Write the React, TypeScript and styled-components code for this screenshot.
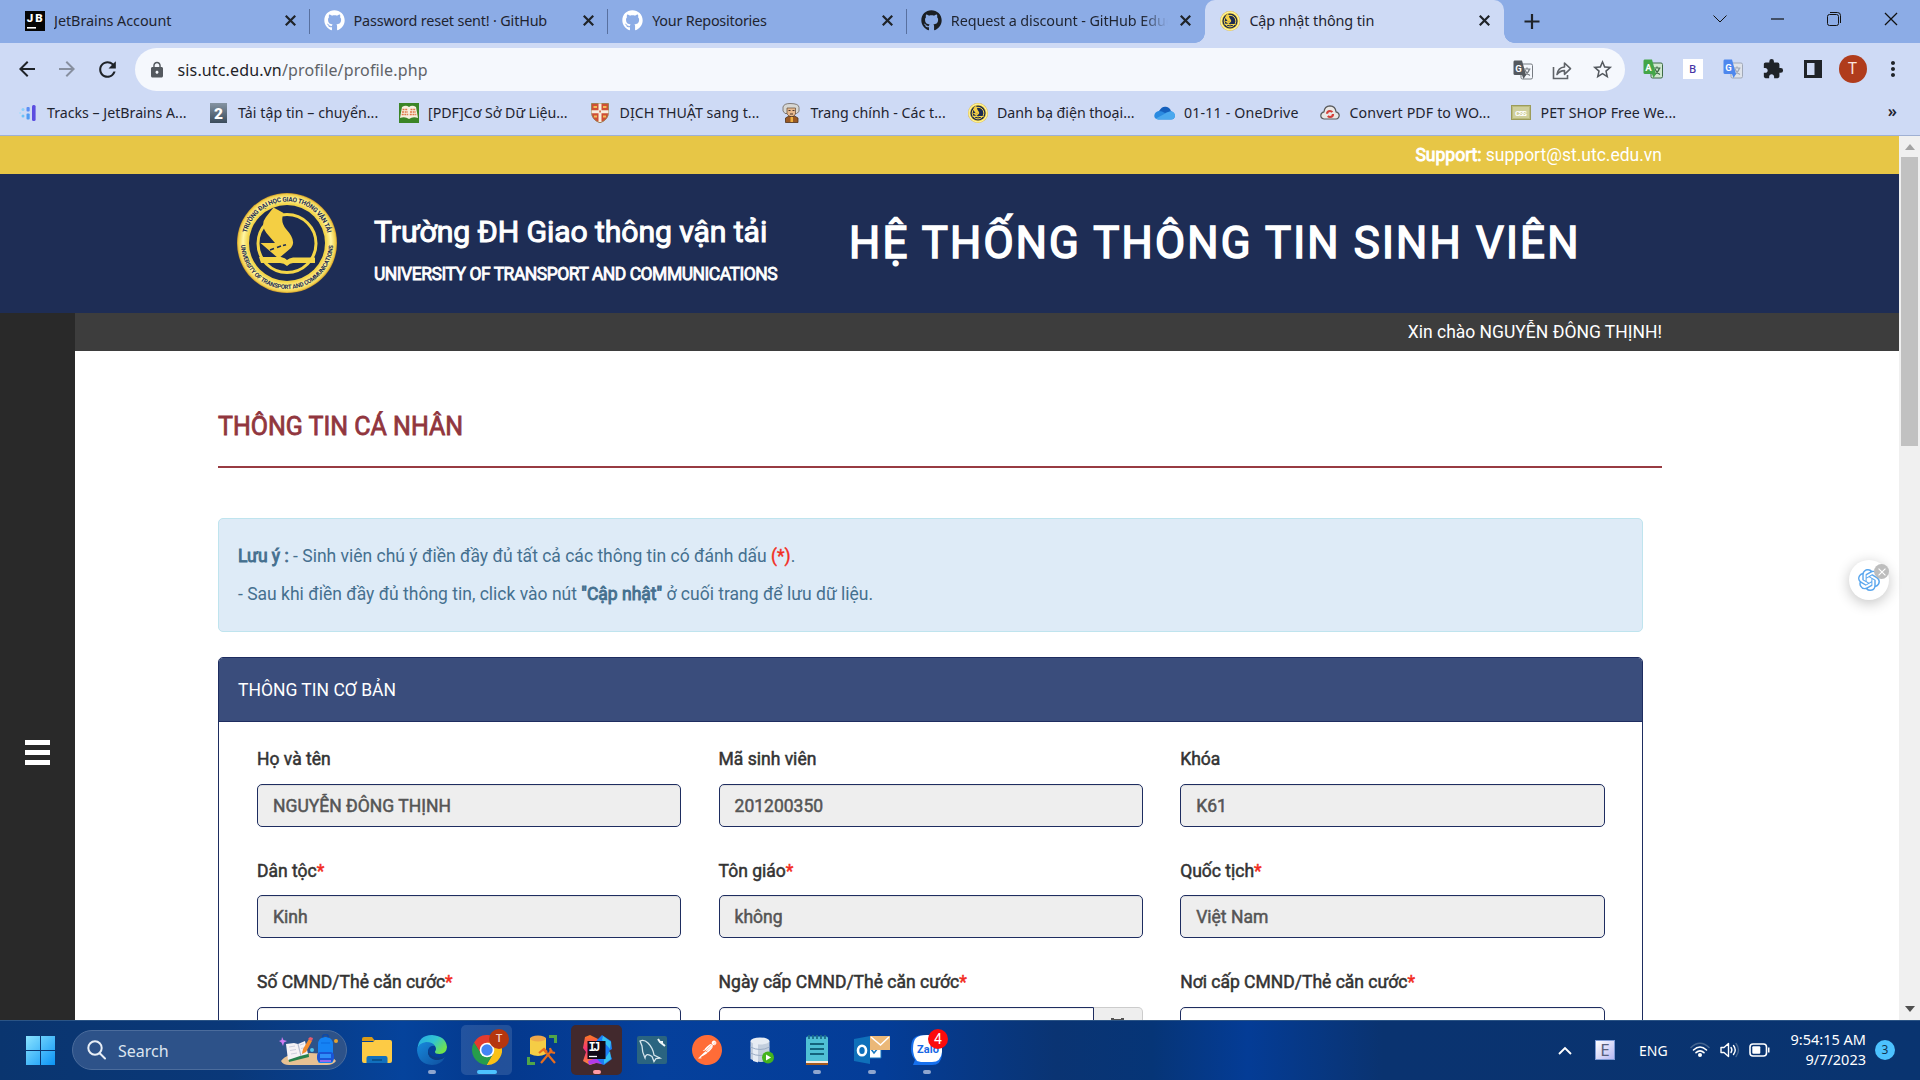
import React from 'react';
import styled, { createGlobalStyle, css } from 'styled-components';
import { FaGithub } from 'react-icons/fa';
import { MdExtension, MdLock, MdStarBorder, MdRefresh, MdArrowBack, MdArrowForward, MdMoreVert } from 'react-icons/md';
import { SiOpenai, SiPostman } from 'react-icons/si';

const GlobalStyle = createGlobalStyle`
  * { box-sizing: border-box; }
  html, body { margin: 0; padding: 0; overflow: hidden; }
  svg { display: block; flex: none; }
`;

const uiFont = `"Noto Sans", "Open Sans", sans-serif`;

const Screen = styled.div`
  width: 1920px;
  height: 1080px;
  display: flex;
  flex-direction: column;
  overflow: hidden;
  background: #fff;
  font-family: Roboto, sans-serif;
`;

/* ---------- browser chrome ---------- */

const TabStrip = styled.div`
  height: 43px;
  flex: none;
  display: flex;
  align-items: stretch;
  padding-left: 11px;
  background: #8cace6;
  font-family: ${uiFont};
`;

const Tab = styled.div<{ $active?: boolean; $divider?: boolean }>`
  position: relative;
  width: 298.6px;
  flex: none;
  display: flex;
  align-items: center;
  padding: 0 14px 2px 14px;
  font-size: 14.4px;
  color: #1f2430;
  ${(p) =>
    p.$divider &&
    css`
      &::after {
        content: '';
        position: absolute;
        right: 0;
        top: 9px;
        width: 1px;
        height: 25px;
        background: #58709f;
      }
    `}
  ${(p) =>
    p.$active &&
    css`
      background: #cedaf5;
      border-radius: 10px 10px 0 0;
      padding-left: 15px;
      &::before,
      &::after {
        content: '';
        position: absolute;
        bottom: 0;
        width: 10px;
        height: 10px;
      }
      &::before {
        left: -10px;
        background: radial-gradient(circle at 0 0, transparent 9.5px, #cedaf5 10px);
      }
      &::after {
        right: -10px;
        background: radial-gradient(circle at 100% 0, transparent 9.5px, #cedaf5 10px);
      }
    `}
`;

const TabTitle = styled.span<{ $ls?: number; $fade?: boolean }>`
  flex: 1;
  margin-left: 9px;
  overflow: hidden;
  white-space: nowrap;
  letter-spacing: ${(p) => p.$ls ?? 0}px;
  ${(p) => p.$fade && 'margin-right: 10px; mask-image: linear-gradient(90deg, #000 87%, transparent 99%);'}
`;

const WindowButtons = styled.div`
  margin-left: auto;
  display: flex;
  align-items: flex-start;
  padding-top: 9px;
`;

const WindowButton = styled.div`
  width: 57.2px;
  height: 20px;
  display: flex;
  align-items: center;
  justify-content: center;
`;

const Toolbar = styled.div`
  height: 53px;
  flex: none;
  display: flex;
  align-items: center;
  padding: 0 0 1px 15px;
  background: #cedaf5;
  color: #1f2328;
`;

const NavButton = styled.div<{ $dim?: boolean }>`
  width: 40px;
  display: flex;
  justify-content: flex-start;
  color: ${(p) => (p.$dim ? '#878f9f' : '#1f2328')};
`;

const AddressBar = styled.div`
  width: 1490px;
  flex: none;
  height: 43px;
  margin-top: 1px;
  display: flex;
  align-items: center;
  border-radius: 22px;
  background: #f5f8fd;
  padding: 0 11px 0 13px;
  font-family: ${uiFont};
  font-size: 16px;
  color: #1f2328;
`;

const Url = styled.span`
  margin-left: 11.5px;
  letter-spacing: 0.14px;
  flex: 1;
  span { color: #5f6368; }
`;

const AddressActions = styled.div`
  display: flex;
  align-items: center;
  gap: 19px;
  color: #54595f;
`;

const Extensions = styled.div`
  flex: 1;
  display: flex;
  align-items: center;
  padding-left: 7.5px;
`;

const ExtSlot = styled.div`
  width: 40px;
  flex: none;
  display: flex;
  justify-content: center;
`;

const LetterTile = styled.div`
  width: 20px;
  height: 20px;
  background: #fff;
  color: #4633a5;
  font: 500 11px/20px ${uiFont};
  text-align: center;
`;

const Avatar = styled.div<{ $size: number }>`
  width: ${(p) => p.$size}px;
  height: ${(p) => p.$size}px;
  border-radius: 50%;
  background: #b03c1c;
  color: #fbe6df;
  font: 400 ${(p) => p.$size * 0.56}px/${(p) => p.$size}px Roboto, sans-serif;
  text-align: center;
`;

const Bookmarks = styled.div`
  height: 40px;
  flex: none;
  display: flex;
  align-items: center;
  padding: 0 23px 6px 17px;
  background: #cedaf5;
  border-bottom: 1px solid #9fb0d3;
  font-family: ${uiFont};
  font-size: 14.2px;
  color: #1f2430;
`;

const Bookmark = styled.div<{ $w: number; $ls: number }>`
  width: ${(p) => p.$w}px;
  flex: none;
  display: flex;
  align-items: center;
  gap: 9px;
  white-space: nowrap;
  letter-spacing: ${(p) => p.$ls}px;
`;

const BookmarkIcon = styled.div`
  width: 21px;
  flex: none;
  display: flex;
  justify-content: center;
`;

const More = styled.span`
  margin-left: auto;
  font-weight: 600;
  font-size: 16px;
  line-height: 18px;
  padding-bottom: 3px;
`;

/* ---------- web page ---------- */

const Viewport = styled.div`
  height: 884px;
  flex: none;
  display: flex;
  overflow: hidden;
  position: relative;
`;

const Page = styled.div`
  width: 1899px;
  flex: none;
  display: flex;
  flex-direction: column;
  overflow: hidden;
`;

const SupportBar = styled.div`
  height: 38px;
  flex: none;
  background: #e7c646;
  color: #fff;
  padding-right: 237px;
  font-size: 17.5px;
  line-height: 38px;
  text-align: right;
  b { font-weight: 400; -webkit-text-stroke: 0.9px; }
`;

const Header = styled.div`
  height: 139px;
  flex: none;
  display: flex;
  align-items: center;
  padding: 0 0 1px 237px;
  background: #1e2d55;
  color: #fff;
`;

const School = styled.div`
  width: 475px;
  margin-left: 37px;
  padding-top: 12px;
  white-space: nowrap;
`;

const SchoolName = styled.div`
  font-size: 30.2px;
  line-height: 40px;
  letter-spacing: -0.1px;
  -webkit-text-stroke: 1px;
`;

const SchoolEnglish = styled.div`
  margin-top: 9px;
  font-size: 17.5px;
  line-height: 26px;
  letter-spacing: -0.49px;
  -webkit-text-stroke: 0.8px;
`;

const SystemName = styled.div`
  font-size: 43.75px;
  line-height: 60px;
  letter-spacing: 2.2px;
  -webkit-text-stroke: 1.6px;
  white-space: nowrap;
`;

const Body = styled.div`
  flex: 1;
  display: flex;
  min-height: 0;
`;

const Sidebar = styled.div`
  width: 75px;
  flex: none;
  background: #292929;
  display: flex;
  flex-direction: column;
  align-items: center;
  gap: 4.4px;
  padding-top: 426.7px;
`;

const MenuLine = styled.div`
  width: 25px;
  height: 5.6px;
  background: #fff;
`;

const Main = styled.div`
  flex: 1;
  min-width: 0;
`;

const Greeting = styled.div`
  height: 38px;
  padding-right: 237px;
  background: #3d3d3d;
  color: #fff;
  font-size: 17.5px;
  line-height: 38px;
  text-align: right;
`;

const Content = styled.div`
  padding: 0 237px 0 143px;
`;

const SectionTitle = styled.div`
  height: 117px;
  padding-top: 58px;
  border-bottom: 2px solid #983b42;
  color: #91363e;
  font-size: 25px;
  line-height: 36px;
  -webkit-text-stroke: 0.8px;
`;

const Notice = styled.div`
  width: 1425px;
  height: 114px;
  margin-top: 50px;
  padding: 18px 19px;
  border: 1px solid #bfe4ee;
  border-radius: 5px;
  background: #deebf7;
  color: #45708f;
  font-size: 17.5px;
  line-height: 38px;
  b { font-weight: 400; -webkit-text-stroke: 0.9px; }
  i { font-style: normal; color: #f22c22; -webkit-text-stroke: 0.4px; }
`;

const Panel = styled.div`
  width: 1425px;
  height: 600px;
  margin-top: 25px;
  border: 1px solid #1e2d60;
  border-radius: 5px;
  overflow: hidden;
`;

const PanelHead = styled.div`
  height: 64px;
  padding: 0 19px;
  background: #3a4d7c;
  border-bottom: 1px solid #1e2d60;
  color: #fff;
  font-size: 17.5px;
  line-height: 65px;
`;

const Fields = styled.div`
  display: grid;
  grid-template-columns: repeat(3, 424.4px);
  column-gap: 37.2px;
  row-gap: 31.95px;
  padding: 25px 38px;
`;

const Label = styled.div`
  height: 25px;
  margin-bottom: 11.6px;
  color: #333;
  font-size: 17.5px;
  line-height: 25px;
  -webkit-text-stroke: 0.5px;
  span { color: #f22c22; }
`;

const InputGroup = styled.div`
  display: flex;
`;

const Input = styled.div<{ $disabled?: boolean; $addon?: boolean }>`
  flex: 1;
  height: 43px;
  padding: 0 15px;
  border: 1px solid #1e2d60;
  border-radius: ${(p) => (p.$addon ? '5px 0 0 5px' : '5px')};
  background: ${(p) => (p.$disabled ? '#eee' : '#fff')};
  box-shadow: inset 0 1px 1px rgba(0, 0, 0, 0.075);
  color: #555;
  font-size: 17.5px;
  line-height: 42px;
  -webkit-text-stroke: 0.5px;
`;

const Addon = styled.div`
  width: 49px;
  height: 43px;
  display: flex;
  justify-content: center;
  padding-top: 10px;
  border: 1px solid #ccc;
  border-left: 0;
  border-radius: 0 5px 5px 0;
  background: #eee;
`;

const Scrollbar = styled.div`
  width: 21px;
  flex: none;
  background: #f0f0f0;
  display: flex;
  flex-direction: column;
  align-items: center;
  padding: 8px 0 8px;
`;

const Thumb = styled.div`
  width: 17px;
  height: 289px;
  margin: 7px 0 auto;
  background: #c1c1c1;
`;

const ChatBubble = styled.div`
  position: absolute;
  left: 1849px;
  top: 424px;
  width: 40px;
  height: 40px;
  border-radius: 50%;
  background: #fff;
  box-shadow: 0 3px 14px rgba(0, 0, 0, 0.24);
  display: flex;
  align-items: center;
  justify-content: center;
  color: #5aa7ee;
`;

const ChatClose = styled.div`
  position: absolute;
  right: 0;
  top: 4px;
  width: 15px;
  height: 15px;
  border-radius: 50%;
  background: #bdbdbd;
  display: flex;
  align-items: center;
  justify-content: center;
`;

/* ---------- task bar ---------- */

const Taskbar = styled.div`
  height: 60px;
  flex: none;
  display: flex;
  align-items: center;
  padding-left: 26px;
  border-top: 1px solid #2b5485;
  background: linear-gradient(90deg, #0a356f 0%, #0a3879 12%, #05439c 21%, #04388c 26%, #05409c 34%, #043d98 46%, #0a3473 55%, #063577 60%, #043c96 65%, #0a3370 72%, #093470 100%);
  color: #fff;
  font-family: ${uiFont};
`;

const SearchBox = styled.div`
  width: 275px;
  height: 40px;
  margin: 0 2px 1px 17px;
  display: flex;
  align-items: center;
  padding: 0 7px 0 14px;
  border: 1px solid #4b6c9c;
  border-radius: 20px;
  background: #2d5289;
  color: #dce5f0;
  font-size: 16px;
  span { margin: 1px 0 0 12px; flex: 1; letter-spacing: 0; }
`;

const TaskItem = styled.div<{ $tile?: string }>`
  position: relative;
  width: 51px;
  height: 50px;
  margin: 0 2px 1px;
  display: flex;
  align-items: center;
  justify-content: center;
  border-radius: 5px;
  background: ${(p) => p.$tile ?? 'transparent'};
`;

const Running = styled.div<{ $w: number; $c: string }>`
  position: absolute;
  bottom: 1px;
  left: calc(50% - ${(p) => p.$w / 2}px);
  width: ${(p) => p.$w}px;
  height: 4px;
  border-radius: 2px;
  background: ${(p) => p.$c};
`;

const CornerBadge = styled.div<{ $red?: boolean }>`
  position: absolute;
  right: ${(p) => (p.$red ? 4 : 3)}px;
  top: 4px;
  width: 20px;
  height: 20px;
  border-radius: 50%;
  background: ${(p) => (p.$red ? '#fb0b0b' : '#b5360f')};
  color: ${(p) => (p.$red ? '#fff' : '#f3cfc2')};
  font: ${(p) => (p.$red ? '400 14px' : '500 11px')}/20px Roboto, sans-serif;
  text-align: center;
`;

const Tray = styled.div`
  margin-left: auto;
  display: flex;
  align-items: center;
  padding: 0 25px 1px 0;
  font-size: 14.5px;
`;

const InputTile = styled.div`
  width: 20px;
  height: 20px;
  margin: 0 24px 0 23px;
  background: linear-gradient(135deg, #fff, #b6b8f3);
  border: 1px solid #7d9ad5;
  color: #56607c;
  font: 400 17px/18px ${uiFont};
  text-align: center;
`;

const Language = styled.span`
  width: 51px;
  font-size: 14px;
`;

const TrayIcons = styled.div`
  display: flex;
  align-items: center;
  gap: 9.5px;
`;

const Clock = styled.div`
  width: 85px;
  margin: 0 0 2px 11px;
  text-align: right;
  line-height: 20px;
  white-space: nowrap;
`;

const CountBadge = styled.div`
  width: 20px;
  height: 20px;
  margin-left: 9px;
  border-radius: 50%;
  background: #4cc2ff;
  color: #12344f;
  font-size: 12px;
  line-height: 20px;
  text-align: center;
`;

/* ---------- drawings ---------- */

const Cross = ({ size = 10, color = '#1f2328', w = 2 }: { size?: number; color?: string; w?: number }) => (
  <svg width={size} height={size} viewBox="0 0 10 10">
    <path d="M.7.7l8.6 8.6M9.3.7L.7 9.3" stroke={color} strokeWidth={w} fill="none" />
  </svg>
);

const Seal = ({ size, detailed }: { size: number; detailed?: boolean }) => (
  <svg width={size} height={size} viewBox="0 0 100 100">
    <defs>
      <radialGradient id="ring" cx="50%" cy="50%" r="50%">
        <stop offset="78%" stopColor="#f3d54a" />
        <stop offset="88%" stopColor="#fff6a4" />
        <stop offset="97%" stopColor="#f1cf4b" />
        <stop offset="100%" stopColor="#c9962c" />
      </radialGradient>
      <path id="arcTop" d="M8.500 50a41.500 41.500 0 0 1 83 0" />
      <path id="arcBottom" d="M4 50a46 46 0 0 0 92 0" />
    </defs>
    <circle cx="50" cy="50" r="50" fill="url(#ring)" />
    <circle cx="50" cy="50" r="38" fill="#1c2b52" />
    <circle cx="50" cy="50.500" r="29" fill="none" stroke="#f4d548" strokeWidth={detailed ? 3 : 5} />
    <path d="M29 24Q22 33 32 43L38 50H23.500L41.500 65.500 54 55Q60 48 49 36 43 29 46.500 20L36.500 14.500Z" fill="#f4cf43" />
    <path d="M22 64H44Q48.500 65 50 67Q52 65 56 64.500H78V70H56Q53 70 50 73Q47 70 43 70H24Z" fill="#f4d548" />
    <path d="M33 57l4-1.500M40 54.500l4-1.500M46 52.500l3-.8" stroke="#1c2b52" strokeWidth="1.600" />
    {detailed && (
      <g fill="#1c2b52" fontFamily="Roboto, sans-serif" fontWeight="700" fontSize="6.4">
        <text><textPath href="#arcTop" startOffset="10" textLength="110">TRƯỜNG ĐẠI HỌC GIAO THÔNG VẬN TẢI</textPath></text>
        <text fontSize="6"><textPath href="#arcBottom" startOffset="2" textLength="140">UNIVERSITY OF TRANSPORT AND COMMUNICATIONS</textPath></text>
      </g>
    )}
  </svg>
);

const JetBrainsIcon = () => (
  <svg width="20" height="20" viewBox="0 0 20 20">
    <rect width="20" height="20" fill="#050505" />
    <text x="1.800" y="11" fontFamily="Roboto, sans-serif" fontWeight="900" fontSize="11.500" fill="#fff" textLength="16">JB</text>
    <rect x="2" y="16" width="9" height="1.600" fill="#fff" />
  </svg>
);

const TranslateIcon = ({ front, back, line, letter = 'G' }: { front: string; back: string; line: string; letter?: string }) => (
  <svg width="20" height="20" viewBox="0 0 20 20">
    <rect x="8" y="4" width="11.500" height="15" rx="1.500" fill={back} stroke={line} strokeWidth="1" />
    <path d="M10.500 9h7M14 7.500V9M16.500 9q-1 4-5 6.500M12 10q1.500 4 5 5.500" stroke={line} strokeWidth="1.200" fill="none" />
    <path d="M1.500 0.500H9L13 15H2Q.5 15 .5 13.500V2Q.5.500 1.500.5Z" fill={front} />
    <path d="M9 15h4l-2.500 4z" fill={front} />
    <text x="2.300" y="11.500" fontFamily="Roboto, sans-serif" fontWeight="700" fontSize="9.500" fill="#fff">{letter}</text>
  </svg>
);

const ShareIcon = () => (
  <svg width="20" height="20" viewBox="0 0 20 20" fill="none" stroke="#5f6368" strokeWidth="1.600">
    <path d="M1.500 7v11.500h14V15" />
    <path d="M5 14.500Q6 7.500 12.500 7V3L18.500 8.700 12.500 14.300V10.600Q8 10.500 5 14.500Z" strokeLinejoin="round" />
  </svg>
);

const TracksIcon = () => (
  <svg width="18" height="18" viewBox="0 0 18 18">
    <rect x="13" y="1" width="3.600" height="16" rx="1.500" fill="#5b4de0" />
    <rect x="7.500" y="3" width="3.200" height="4.500" rx="1" fill="#5a8df5" />
    <rect x="7.500" y="9.500" width="3.200" height="6" rx="1" fill="#4e9cf5" />
    <circle cx="4" cy="5.500" r="1.500" fill="#8cd0fa" />
    <circle cx="4" cy="12" r="1.500" fill="#6bc1f8" />
    <circle cx="1.200" cy="9" r="1" fill="#a8dcfb" />
  </svg>
);

const TwoIcon = () => (
  <svg width="17" height="20" viewBox="0 0 17 20">
    <defs><linearGradient id="two" x2="0" y2="1"><stop stopColor="#8594a3" /><stop offset="1" stopColor="#3b4c5c" /></linearGradient></defs>
    <rect width="17" height="20" fill="url(#two)" />
    <text x="4" y="15.500" fontFamily="Roboto, sans-serif" fontWeight="900" fontSize="15.500" fill="#fff">2</text>
  </svg>
);

const BookIcon = () => (
  <svg width="20" height="20" viewBox="0 0 20 20">
    <rect width="20" height="20" fill="#3b8527" />
    <path d="M3 4q4-2.500 7 0 3-2.500 7 0l2 11q-5-2-9 1-4-3-9-1z" fill="#f8efdf" />
    <path d="M3.500 6.500h5M11.500 6.500h5M3 9h6M11 9h6M2.700 11.500h6.500M10.800 11.500h6.500" stroke="#e0774a" strokeWidth="1.300" strokeDasharray="2 .7" />
  </svg>
);

const ShieldIcon = () => (
  <svg width="18" height="20" viewBox="0 0 18 20">
    <path d="M.5.500h17V9q0 8-8.500 10.800Q.5 17 .5 9Z" fill="#cf4f35" stroke="#9f8055" />
    <path d="M7.500.500h3v6.700H17.500v3H10.500v8.700H7.500v-8.700H.5V7.200H7.500Z" fill="#f6eee0" />
    <path d="M2.500 3h3.500v2H2.500zM12 3h3.500v2H12zM3 12.500h3v2H3zM12 12.500h3v2h-3z" fill="#f1bd57" />
    <path d="M8.300 7.500h1.500v2H8.300z" fill="#cf4f35" />
  </svg>
);

const PortraitIcon = () => (
  <svg width="18" height="20" viewBox="0 0 18 20">
    <path d="M1 4Q2 .5 8 .5q9 0 9 4v4l-2.500 2H3L1 8Z" fill="#d7d7d4" stroke="#6d655d" strokeWidth=".8" />
    <path d="M5 5h8.500V11l-2 2.500h-4L5 11Z" fill="#e8b98d" stroke="#5f4735" strokeWidth=".7" />
    <path d="M6.500 7.500h2M10.500 7.500h2M8 11h3" stroke="#4b372a" />
    <path d="M3.500 19.500V15l3.500-2 2.500 1 3-1 3.500 2v4.500Z" fill="#9a5923" stroke="#4f331d" strokeWidth=".8" />
    <path d="M8.500 14h2.500v5H8.500z" fill="#eeb142" />
  </svg>
);

const CloudIcon = () => (
  <svg width="21" height="14" viewBox="0 0 21 14">
    <path d="M5 5Q8 0 12 .8q4 .7 5 4.500L12 9 3 8Z" fill="#1560bd" />
    <path d="M4.500 13.500Q0 13 .3 9.500.8 5.500 5 5q3 0 6 2l6-2q4 1.500 4 5-.5 3.500-4 3.500Z" fill="#2a8ae0" />
    <path d="M2 12.500L13 6.500q7-3 8 3-.5 4-4 4H4.500q-1.700 0-2.500-1Z" fill="#4aa8ee" />
  </svg>
);

const PdfCloudIcon = () => (
  <svg width="20" height="15" viewBox="0 0 20 15">
    <path d="M4 14Q.7 13.500.8 10.300 1 7.500 4 6.800 4.500 1 10 .8q5.500.2 6 6 3 .7 3.200 3.500-.2 3.500-3.200 3.700Z" fill="#e9e7e6" stroke="#58595b" strokeWidth="1.200" />
    <circle cx="10" cy="9" r="3" fill="none" stroke="#d43f39" strokeWidth="2.200" strokeDasharray="7 2.400" />
  </svg>
);

const CssIcon = () => (
  <svg width="20" height="15" viewBox="0 0 20 15">
    <rect x=".5" y=".5" width="19" height="14" fill="#bcbc7c" stroke="#9c9c5a" />
    <rect x="2" y="2" width="16" height="11" fill="#cfcf9c" />
    <text x="4" y="10.500" fontFamily="Roboto, sans-serif" fontWeight="700" fontSize="8" fill="#fff" textLength="12">CSS</text>
  </svg>
);

const WindowsIcon = () => (
  <svg width="29" height="29" viewBox="0 0 29 29">
    <defs><linearGradient id="win" x2="1" y2="1"><stop stopColor="#8ae3ff" /><stop offset="1" stopColor="#0b94f5" /></linearGradient></defs>
    <path d="M0 0h14v14H0zM15 0h14v14H15zM0 15h14v14H0zM15 15h14v14H15z" fill="url(#win)" />
  </svg>
);

const SearchArt = () => (
  <svg width="60" height="32" viewBox="0 0 60 32">
    <path d="M2 27Q8 18 30 19q22 0 27 8-3 4-9 4H10Q4 31 2 27Z" fill="#e7c193" />
    <path d="M9 23l1 5 20-5-.5-4z" fill="#26814c" />
    <path d="M7 10l8-1 4 1 7-3 3 13-8 2-12 4Z" fill="#f5f2f5" />
    <path d="M19 10l3 12" stroke="#b7bdd0" strokeWidth="1.200" />
    <path d="M10 13l6-1M11 16.500l6-1M12 20l6-1M21 11l4-1.300M22 14.500l4-1M23 18l4-1" stroke="#cdcfdd" strokeWidth="1" />
    <path d="M30 5l3 2-6 11-4 2 1-5Z" fill="#f38b2c" />
    <path d="M29 5l4 2 1-3-3-1z" fill="#e55b6d" />
    <path d="M39 11Q39 3 46.500 3T54 11V27Q54 29 52 29H41Q39 29 39 27Z" fill="#1583f5" />
    <path d="M43.500 3.500q0-3 3-3t3 3" stroke="#0e49a8" strokeWidth="1.600" fill="none" />
    <path d="M42 9h9" stroke="#0f73e8" strokeWidth="1.600" />
    <rect x="38" y="18" width="17" height="10" rx="4" fill="#1a55d6" />
    <path d="M41 20h11v4H41z" fill="#2f8ff8" />
    <path d="M41 27h11" stroke="#b56cf5" strokeWidth="1.600" />
    <path d="M3 3l1.500 3L8 7 5 8.500 4 12 2.500 8.500 0 7l2.500-1Z" fill="#cf7cf2" />
    <circle cx="33" cy="16" r="2" fill="#4ec5ee" />
    <circle cx="57" cy="7" r="2" fill="#e7a32c" />
  </svg>
);

const FolderIcon = () => (
  <svg width="30" height="28" viewBox="0 0 30 28">
    <path d="M0 3Q0 1 2 1h8l3 4H0Z" fill="#d99b18" />
    <path d="M0 6h11l2-2h15q2 0 2 2v19q0 2-2 2H2q-2 0-2-2Z" fill="#fdcb45" />
    <path d="M4.500 27v-5q0-2 2-2h17q2 0 2 2v5Z" fill="#1170be" />
    <path d="M10 24h10" stroke="#0a4e88" strokeWidth="1.700" />
  </svg>
);

const EdgeIcon = () => (
  <svg width="30" height="30" viewBox="0 0 30 30">
    <defs>
      <linearGradient id="edgeA" x2="1" y2=".6"><stop stopColor="#25a7e7" /><stop offset=".55" stopColor="#31c5d0" /><stop offset="1" stopColor="#70e34d" /></linearGradient>
      <linearGradient id="edgeB" x2="1" y2="1"><stop stopColor="#1689dc" /><stop offset="1" stopColor="#104f9e" /></linearGradient>
    </defs>
    <path d="M.5 14Q1.500 0 15 0q14 1 15 12-.5 7-7.500 7-5 0-4.500-2.500Q20 14 18 11 10 5 .5 14Z" fill="url(#edgeA)" />
    <path d="M0 15Q1 8 9 7q7 0 9 4-5-1-7 4-1 8 8 10 5 .5 9-3-4 8-13 8Q1 29 0 15Z" fill="url(#edgeB)" />
    <path d="M11 15q-1 8 8 10 5 .5 9-3-8 2-13-1-3-2-4-6Z" fill="#0c3c82" />
  </svg>
);

const ChromeIcon = () => (
  <svg width="30" height="30" viewBox="0 0 30 30">
    <path d="M2 7.500A15 15 0 0 1 28 7.500L15 8.500 9 19Z" fill="#e33b2e" />
    <path d="M28 7.500A15 15 0 0 1 14.500 30L21 19 21.500 11 15 7.500Z" fill="#fbc116" />
    <path d="M2 7.500A15 15 0 0 0 14.500 30L20.500 19.500 14 22 9 18.500Z" fill="#269d4b" />
    <circle cx="15" cy="15" r="7.300" fill="#fff" />
    <circle cx="15" cy="15" r="5.700" fill="#4285f4" />
  </svg>
);

const SqlToolIcon = () => (
  <svg width="30" height="30" viewBox="0 0 30 30">
    <path d="M3 3v16q8 4 16 0V3Z" fill="#f5cd45" />
    <ellipse cx="11" cy="3.500" rx="8" ry="3" fill="#eea84c" />
    <path d="M22 1.500h6.500V8M1.500 22v6.500H8" stroke="#51a549" strokeWidth="3" fill="none" />
    <path d="M14 28L25 15M17 15l11 13" stroke="#e86d1d" strokeWidth="2.200" />
    <path d="M12 18l5-4 3 3M23 13l1 4 4 1" stroke="#e86d1d" strokeWidth="2.200" fill="none" />
  </svg>
);

const IdeaIcon = () => (
  <svg width="30" height="30" viewBox="0 0 30 30">
    <defs><linearGradient id="ijL" x2="0" y2="1"><stop stopColor="#fb7b24" /><stop offset=".5" stopColor="#f52f7a" /><stop offset="1" stopColor="#fb8a37" /></linearGradient></defs>
    <path d="M3 2l5-2 8 4-2 24-6 2-7-4 3-9-3-4Z" fill="url(#ijL)" />
    <path d="M15 5l5-5 9 6 1 8-3 2 3 8-8 6-9-3Z" fill="#1b7cf5" />
    <path d="M21 1l8 6-1 7-8-9ZM22 25l6-9 1 8-7 5Z" fill="#35c1f2" />
    <path d="M6 26l8-3 6 6-6-1-7 2Z" fill="#b13be8" />
    <rect x="5.500" y="6" width="18" height="18" fill="#120a18" />
    <text x="6.500" y="15.500" fontFamily="Liberation Mono, monospace" fontWeight="700" fontSize="12" fill="#fff" textLength="12">IJ</text>
    <path d="M7 21.500h8" stroke="#fff" strokeWidth="1.300" />
  </svg>
);

const DolphinIcon = () => (
  <svg width="30" height="28" viewBox="0 0 30 28">
    <rect width="30" height="28" rx="2" fill="#2a6480" />
    <path d="M3 5Q7 3 11 7q5 5 6 12l6 3-4 .5-2 3-2-5Q9 16 8 22 5 16 5 10Z" fill="none" stroke="#d5e5ec" strokeWidth="1.300" />
    <path d="M21 3l2 3 3 0M23 6l5 4" stroke="#eef6fa" strokeWidth="2" fill="none" />
  </svg>
);

const DatabaseIcon = () => (
  <svg width="24" height="27" viewBox="0 0 24 27">
    <path d="M.5 4v18q9.500 6 19 0V4Z" fill="#c3cedd" />
    <path d="M3 6v18l5 1.500V7Z" fill="#e6ecf4" />
    <path d="M.5 10q9.500 5 19 0M.5 16q9.500 5 19 0" stroke="#9bacc4" fill="none" />
    <ellipse cx="10" cy="4" rx="9.500" ry="3.500" fill="#e7ecf3" />
    <circle cx="18" cy="20.500" r="6" fill="#44b31d" />
    <path d="M16 17.500l5 3-5 3Z" fill="#fff" />
  </svg>
);

const NotepadIcon = () => (
  <svg width="22" height="30" viewBox="0 0 22 30">
    <path d="M0 3q0-1.500 1.500-1.500h19Q22 1.500 22 3v23H0Z" fill="#4fc0d5" />
    <path d="M3 0v4M7 0v4M11 0v4M15 0v4M19 0v4" stroke="#1b6d8b" strokeWidth="1.800" />
    <path d="M4 9h14M4 14h14M4 19h14" stroke="#14637c" strokeWidth="2" />
    <path d="M0 26h22v2H0z" fill="#f4ebe0" />
    <path d="M0 28h22v2H0z" fill="#a65a1d" />
  </svg>
);

const OutlookIcon = () => (
  <svg width="36" height="28" viewBox="0 0 36 28">
    <path d="M14 9h13v13H14z" fill="#fff" stroke="#1677bf" />
    <path d="M17 13l3 4 4-5" stroke="#1677bf" strokeWidth="1.500" fill="none" />
    <path d="M0 3l16-3v28L0 25Z" fill="#0f70ba" />
    <ellipse cx="8" cy="14.500" rx="4" ry="4.800" fill="none" stroke="#fff" strokeWidth="2.600" />
    <path d="M16 0h20v14H16z" fill="#ebb878" />
    <path d="M17 1l9.500 8L35 1" stroke="#fff" strokeWidth="1.500" fill="none" />
  </svg>
);

const ZaloIcon = () => (
  <svg width="31" height="30" viewBox="0 0 31 30">
    <path d="M3 3Q6 0 14 0h9q8 2 8 12v8q-1 10-10 10H2l2-5Q0 20 0 14Q0 6 3 3Z" fill="#1670ee" />
    <path d="M5 3Q8 0 16 0h7q8 2 8 12v5q-1 10-10 10H10l-4-1Q2 21 2 14 2 6 5 3Z" fill="#fff" />
    <text x="6" y="17.500" fontFamily="Roboto, sans-serif" fontWeight="700" fontSize="11" fill="#1868e5" textLength="22">Zalo</text>
  </svg>
);

const WifiIcon = () => (
  <svg width="20" height="16" viewBox="0 0 20 16" fill="none" strokeLinecap="round">
    <path d="M1 5.500q9-8.500 18 0" stroke="#46658f" strokeWidth="1.500" />
    <path d="M3.500 8q6.500-6 13 0M6 10.700q4-3.600 8 0" stroke="#fff" strokeWidth="1.600" />
    <circle cx="10" cy="13" r="2" fill="#fff" />
  </svg>
);

const SoundIcon = () => (
  <svg width="20" height="16" viewBox="0 0 20 16" fill="none" stroke="#fff" strokeWidth="1.400" strokeLinejoin="round" strokeLinecap="round">
    <path d="M1 5.500h3L8.500 1.500v13L4 10.500H1Z" />
    <path d="M11 5.500q1.800 2.500 0 5M13.500 3.500q3.500 4.500 0 9" />
    <path d="M16 1.500q5 6.500 0 13" stroke="#46658f" />
  </svg>
);

const BatteryIcon = () => (
  <svg width="21" height="14" viewBox="0 0 21 14">
    <rect x="1" y="1" width="16.500" height="12" rx="3" fill="none" stroke="#fff" strokeWidth="1.600" />
    <rect x="3.300" y="3.300" width="8" height="7.400" rx="1" fill="#fff" />
    <path d="M19 4.500h1.500v5H19z" fill="#fff" />
  </svg>
);

/* ---------- data ---------- */

const tabs = [
  { title: 'JetBrains Account', icon: <JetBrainsIcon />, ls: -0.05 },
  { title: 'Password reset sent! · GitHub', icon: <FaGithub size={21} color="#fff" />, ls: -0.18 },
  { title: 'Your Repositories', icon: <FaGithub size={21} color="#fff" />, ls: -0.24 },
  { title: 'Request a discount - GitHub Educ', icon: <FaGithub size={21} color="#1b1f24" />, ls: -0.1, fade: true },
];

const bookmarks = [
  { text: 'Tracks – JetBrains A...', icon: <TracksIcon />, w: 191, ls: 0 },
  { text: 'Tải tập tin – chuyển...', icon: <TwoIcon />, w: 190, ls: 0.04 },
  { text: '[PDF]Cơ Sở Dữ Liệu...', icon: <BookIcon />, w: 191.5, ls: -0.04 },
  { text: 'DỊCH THUẬT sang t...', icon: <ShieldIcon />, w: 191, ls: 0.04 },
  { text: 'Trang chính - Các t...', icon: <PortraitIcon />, w: 186.5, ls: 0.03 },
  { text: 'Danh bạ điện thoại...', icon: <Seal size={20} />, w: 187, ls: -0.04 },
  { text: '01-11 - OneDrive', icon: <CloudIcon />, w: 165.5, ls: 0.17 },
  { text: 'Convert PDF to WO...', icon: <PdfCloudIcon />, w: 191, ls: 0.12 },
  { text: 'PET SHOP Free We...', icon: <CssIcon />, w: 191, ls: 0.05 },
];

const fields: { label: string; required?: boolean; value?: string; date?: boolean }[] = [
  { label: 'Họ và tên', value: 'NGUYỄN ĐÔNG THỊNH' },
  { label: 'Mã sinh viên', value: '201200350' },
  { label: 'Khóa', value: 'K61' },
  { label: 'Dân tộc', required: true, value: 'Kinh' },
  { label: 'Tôn giáo', required: true, value: 'không' },
  { label: 'Quốc tịch', required: true, value: 'Việt Nam' },
  { label: 'Số CMND/Thẻ căn cước', required: true },
  { label: 'Ngày cấp CMND/Thẻ căn cước', required: true, date: true },
  { label: 'Nơi cấp CMND/Thẻ căn cước', required: true },
];

const idle = '#8fa6cf';

export default function App() {
  return (
    <Screen>
      <GlobalStyle />
      <TabStrip>
        {tabs.map((t, i) => (
          <Tab key={t.title} $divider={i < 3}>
            {t.icon}
            <TabTitle $ls={t.ls} $fade={t.fade}>{t.title}</TabTitle>
            <Cross size={11} />
          </Tab>
        ))}
        <Tab $active>
          <Seal size={20} />
          <TabTitle $ls={-0.1}>Cập nhật thông tin</TabTitle>
          <Cross size={11} />
        </Tab>
        <svg width="56" height="43" viewBox="0 0 56 43">
          <path d="M28 14v15M20.500 21.500h15" stroke="#1f2328" strokeWidth="2.200" />
        </svg>
        <WindowButtons>
          <WindowButton><svg width="14" height="8" viewBox="0 0 14 8"><path d="M.5.500L7 7 13.500.500" stroke="#111" fill="none" /></svg></WindowButton>
          <WindowButton><svg width="13" height="2" viewBox="0 0 13 2"><path d="M0 1h13" stroke="#111" strokeWidth="1.200" /></svg></WindowButton>
          <WindowButton><svg width="14" height="14" viewBox="0 0 14 14" fill="none" stroke="#111"><rect x=".5" y="2.500" width="11" height="11" rx="2" /><path d="M3 .5h7.500q3 0 3 3V11" /></svg></WindowButton>
          <WindowButton><Cross size={14} w={0.9} color="#111" /></WindowButton>
        </WindowButtons>
      </TabStrip>

      <Toolbar>
        <NavButton><MdArrowBack size={24} /></NavButton>
        <NavButton $dim><MdArrowForward size={24} /></NavButton>
        <NavButton><MdRefresh size={25} /></NavButton>
        <AddressBar>
          <MdLock size={18} color="#54595f" />
          <Url>sis.utc.edu.vn<span>/profile/profile.php</span></Url>
          <AddressActions>
            <TranslateIcon front="#54595f" back="#f5f8fd" line="#777c82" />
            <ShareIcon />
            <MdStarBorder size={23} />
          </AddressActions>
        </AddressBar>
        <Extensions>
          <ExtSlot><TranslateIcon front="#43a648" back="#cfe8cf" line="#3d6b45" letter="A" /></ExtSlot>
          <ExtSlot><LetterTile>B</LetterTile></ExtSlot>
          <ExtSlot><TranslateIcon front="#4d87ee" back="#dfe3ea" line="#a1a9b8" /></ExtSlot>
          <ExtSlot><MdExtension size={22} /></ExtSlot>
          <ExtSlot>
            <svg width="18" height="18" viewBox="0 0 18 18"><path d="M0 0h18v18H0zM3 3v12h7.500V3z" fill="#1f2328" fillRule="evenodd" /></svg>
          </ExtSlot>
          <ExtSlot><Avatar $size={28}>T</Avatar></ExtSlot>
          <ExtSlot><MdMoreVert size={24} /></ExtSlot>
        </Extensions>
      </Toolbar>

      <Bookmarks>
        {bookmarks.map((b) => (
          <Bookmark key={b.text} $w={b.w} $ls={b.ls}>
            <BookmarkIcon>{b.icon}</BookmarkIcon>
            {b.text}
          </Bookmark>
        ))}
        <More>»</More>
      </Bookmarks>

      <Viewport>
        <Page>
          <SupportBar><b>Support:</b> support@st.utc.edu.vn</SupportBar>
          <Header>
            <Seal size={100} detailed />
            <School>
              <SchoolName>Trường ĐH Giao thông vận tải</SchoolName>
              <SchoolEnglish>UNIVERSITY OF TRANSPORT AND COMMUNICATIONS</SchoolEnglish>
            </School>
            <SystemName>HỆ THỐNG THÔNG TIN SINH VIÊN</SystemName>
          </Header>
          <Body>
            <Sidebar><MenuLine /><MenuLine /><MenuLine /></Sidebar>
            <Main>
              <Greeting>Xin chào NGUYỄN ĐÔNG THỊNH!</Greeting>
              <Content>
                <SectionTitle>THÔNG TIN CÁ NHÂN</SectionTitle>
                <Notice>
                  <div><b>Lưu ý :</b> - Sinh viên chú ý điền đầy đủ tất cả các thông tin có đánh dấu <i>(*)</i>.</div>
                  <div>- Sau khi điền đầy đủ thông tin, click vào nút <b>"Cập nhật"</b> ở cuối trang để lưu dữ liệu.</div>
                </Notice>
                <Panel>
                  <PanelHead>THÔNG TIN CƠ BẢN</PanelHead>
                  <Fields>
                    {fields.map((f) => (
                      <div key={f.label}>
                        <Label>{f.label}{f.required && <span>*</span>}</Label>
                        <InputGroup>
                          <Input $disabled={!!f.value} $addon={f.date}>{f.value}</Input>
                          {f.date && (
                            <Addon>
                              <svg width="17" height="18" viewBox="0 0 17 18"><path d="M0 2h2V0h3v1h7V0h3v2h2v16H0zM2 6v10h13V6z" fill="#555" fillRule="evenodd" /></svg>
                            </Addon>
                          )}
                        </InputGroup>
                      </div>
                    ))}
                  </Fields>
                </Panel>
              </Content>
            </Main>
          </Body>
        </Page>
        <Scrollbar>
          <svg width="10" height="6" viewBox="0 0 10 6"><path d="M5 0l5 6H0z" fill="#a3a3a3" /></svg>
          <Thumb />
          <svg width="10" height="6" viewBox="0 0 10 6"><path d="M0 0h10L5 6z" fill="#505050" /></svg>
        </Scrollbar>
        <ChatBubble>
          <SiOpenai size={22} />
          <ChatClose><Cross size={8} color="#fff" w={1.4} /></ChatClose>
        </ChatBubble>
      </Viewport>

      <Taskbar>
        <WindowsIcon />
        <SearchBox>
          <svg width="19" height="20" viewBox="0 0 19 20" fill="none" stroke="#e8eef6" strokeWidth="2" strokeLinecap="round"><circle cx="8" cy="8" r="6.700" /><path d="M13 13.500l5 5" /></svg>
          <span>Search</span>
          <SearchArt />
        </SearchBox>
        <TaskItem><FolderIcon /></TaskItem>
        <TaskItem><EdgeIcon /><Running $w={8} $c={idle} /></TaskItem>
        <TaskItem $tile="rgba(255,255,255,0.12)"><ChromeIcon /><CornerBadge>T</CornerBadge><Running $w={20} $c="#4cc2ff" /></TaskItem>
        <TaskItem><SqlToolIcon /></TaskItem>
        <TaskItem $tile="#42292d"><IdeaIcon /><Running $w={8} $c="#ff9aa5" /></TaskItem>
        <TaskItem><DolphinIcon /></TaskItem>
        <TaskItem>
          <svg width="30" height="30" viewBox="0 0 30 30">
            <circle cx="15" cy="15" r="14" fill="#fff" />
            <SiPostman size={30} color="#ff6c37" />
          </svg>
        </TaskItem>
        <TaskItem><DatabaseIcon /></TaskItem>
        <TaskItem><NotepadIcon /><Running $w={8} $c={idle} /></TaskItem>
        <TaskItem><OutlookIcon /><Running $w={8} $c={idle} /></TaskItem>
        <TaskItem><ZaloIcon /><CornerBadge $red>4</CornerBadge><Running $w={8} $c={idle} /></TaskItem>
        <Tray>
          <svg width="14" height="9" viewBox="0 0 14 9"><path d="M1 8l6-6 6 6" stroke="#fff" strokeWidth="1.900" fill="none" /></svg>
          <InputTile>E</InputTile>
          <Language>ENG</Language>
          <TrayIcons><WifiIcon /><SoundIcon /><BatteryIcon /></TrayIcons>
          <Clock>9:54:15 AM<br />9/7/2023</Clock>
          <CountBadge>3</CountBadge>
        </Tray>
      </Taskbar>
    </Screen>
  );
}
